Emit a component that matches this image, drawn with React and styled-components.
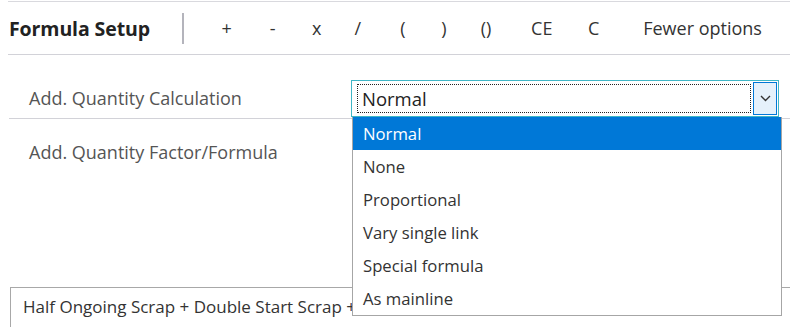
import React from "react";
import styled, { createGlobalStyle } from "styled-components";

const Global = createGlobalStyle`
  html, body { margin: 0; padding: 0; background: #fff; }
  body { font-family: "Open Sans", "Noto Sans", sans-serif; color: #333; overflow: hidden; }
`;

const Page = styled.div`
  width: 790px;
  height: 327px;
  position: relative;
  overflow: hidden;
  padding-top: 1px;
  box-sizing: border-box;
`;

const Toolbar = styled.div`
  margin-left: 8px;
  height: 52px;
  border-top: 1px solid #d9d9de;
  border-bottom: 1px solid #d2d2d8;
  display: flex;
  align-items: center;
`;

const Title = styled.div`
  font-weight: 700;
  font-size: 19.5px;
  color: #222;
  padding-left: 1px;
  width: 178px;
  box-sizing: border-box;
  letter-spacing: -0.1px;
`;

const Divider = styled.div`
  width: 2px;
  height: 31px;
  background: #b4b4bc;
  margin-right: 21px;
`;

const Op = styled.button`
  all: unset;
  font-family: "Open Sans", "Noto Sans", sans-serif;
  font-size: 18px;
  color: #333;
  text-align: ${(p) => (p.$left ? "left" : "center")};
  padding-left: ${(p) => (p.$left ? 29 : 0)}px;
  width: ${(p) => p.$w}px;
  white-space: nowrap;
`;

const Form = styled.div`
  margin-left: 9px;
`;

const Row = styled.div`
  height: ${(p) => p.$h}px;
  display: flex;
  align-items: ${(p) => p.$align || "flex-end"};
  border-bottom: ${(p) => (p.$line ? "1px solid #d2d2d8" : "none")};
`;

const Label = styled.div`
  font-size: 18px;
  color: #555;
  padding-left: 20px;
  width: 322px;
  line-height: 22px;
  padding-bottom: ${(p) => p.$pb || 0}px;
  padding-top: ${(p) => p.$pt || 0}px;
  white-space: nowrap;
`;

const Select = styled.div`
  width: 428px;
  height: 37px;
  box-sizing: border-box;
  border: 1px solid #3fb6c6;
  margin-bottom: 1px;
  display: flex;
  align-items: stretch;
  padding: 3px 1px 3px 5px;
  background: #fff;
`;

const SelectValue = styled.div`
  flex: 1;
  border: 1px dotted #222;
  font-size: 18.5px;
  color: #222;
  display: flex;
  align-items: center;
  padding-left: 4px;
  margin-right: 2px;
`;

const ArrowBtn = styled.div`
  width: 22px;
  margin: -2px 0 -2px 0;
  background: #e5f1fb;
  border: 1px solid #0078d7;
  display: flex;
  align-items: center;
  justify-content: center;
`;

const List = styled.ul`
  position: absolute;
  left: 352px;
  top: 117px;
  width: 430px;
  margin: 0;
  padding: 0;
  list-style: none;
  box-sizing: border-box;
  border: 1px solid #a6a6a6;
  border-top: none;
  background: #fff;
  z-index: 5;
`;

const Item = styled.li`
  height: 33px;
  line-height: 33px;
  padding-left: 10px;
  font-size: 16.7px;
  color: ${(p) => (p.$active ? "#fff" : "#333")};
  background: ${(p) => (p.$active ? "#0078d7" : "transparent")};
`;

const FormulaBox = styled.div`
  position: absolute;
  left: 10px;
  top: 287px;
  right: 0;
  height: 60px;
  border: 1px solid #a8a8a8;
  border-right: none;
  box-sizing: border-box;
  padding: 7px 12px;
`;

const FormulaText = styled.div`
  font-size: 17px;
  color: #333;
  white-space: nowrap;
`;

const ops = [
  { t: "+", w: 44 },
  { t: "-", w: 50 },
  { t: "x", w: 40 },
  { t: "/", w: 44 },
  { t: "(", w: 48 },
  { t: ")", w: 36 },
  { t: "()", w: 50 },
  { t: "CE", w: 64 },
  { t: "C", w: 42 },
];

const options = ["Normal", "None", "Proportional", "Vary single link", "Special formula", "As mainline"];

export default function App() {
  return (
    <>
      <Global />
      <Page>
        <Toolbar>
          <Title>Formula Setup</Title>
          <Divider />
          {ops.map((o) => (
            <Op key={o.t} $w={o.w}>{o.t}</Op>
          ))}
          <Op $w={150} $left>Fewer options</Op>
        </Toolbar>
        <Form>
          <Row $h={63} $line>
            <Label $pb={9}>Add. Quantity Calculation</Label>
            <Select>
              <SelectValue>Normal</SelectValue>
              <ArrowBtn>
                <svg width="11" height="7" viewBox="0 0 11 7">
                  <path d="M1 1l4.5 4.5L10 1" fill="none" stroke="#333" strokeWidth="1.4" />
                </svg>
              </ArrowBtn>
            </Select>
          </Row>
          <Row $h={60} $align="flex-start">
            <Label $pt={22}>Add. Quantity Factor/Formula</Label>
          </Row>
        </Form>
        <FormulaBox>
          <FormulaText>Half Ongoing Scrap + Double Start Scrap +</FormulaText>
        </FormulaBox>
        <List>
          {options.map((o, i) => (
            <Item key={o} $active={i === 0}>{o}</Item>
          ))}
        </List>
      </Page>
    </>
  );
}
